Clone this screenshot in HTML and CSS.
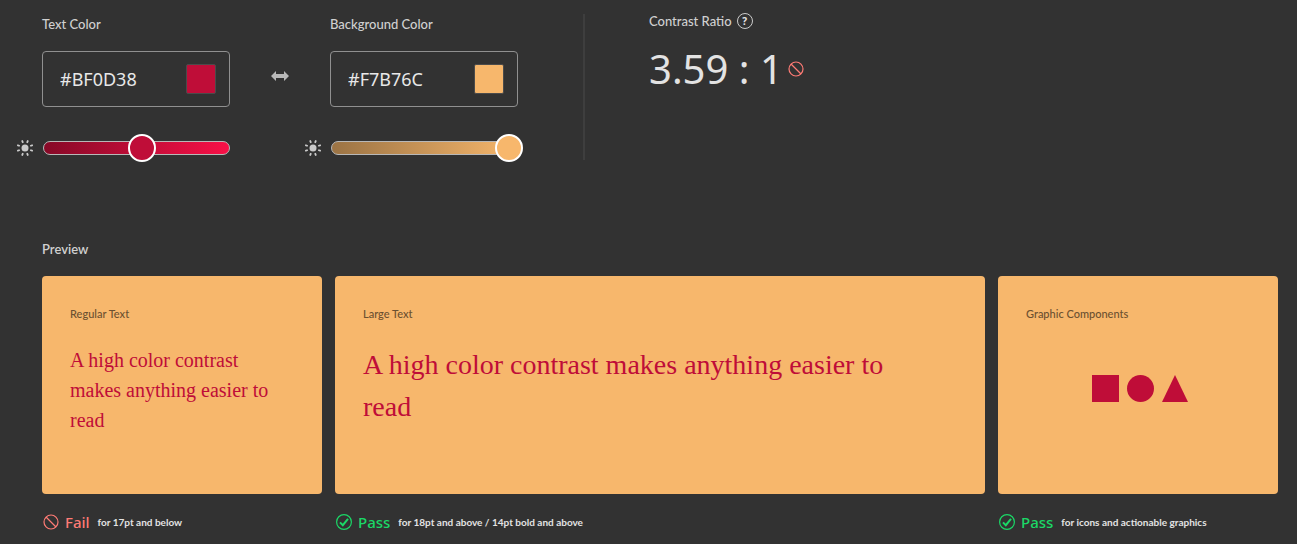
FILE: index.html
```html
<!DOCTYPE html>
<html lang="en">
<head>
<meta charset="utf-8">
<title>Contrast Checker</title>
<link rel="stylesheet" href="styles.css">
</head>
<body>
<main class="page">
  <section class="controls">
    <div class="field">
      <label class="label" for="text-hex">Text Color</label>
      <div class="hex-box">
        <input class="hex" id="text-hex" type="text" value="#BF0D38" spellcheck="false">
        <button class="swatch swatch-text" type="button" aria-label="Pick text color"></button>
      </div>
      <div class="slider-row">
        <svg class="sun" viewBox="0 0 16 16" aria-hidden="true"><circle cx="8" cy="8" r="3.5"/><path d="M5 .4l1 2.400M11 .4l-1 2.400M5 15.600l1-2.400M11 15.600l-1-2.400M.2 5l2.600 1M15.800 5l-2.600 1M.2 11l2.600-1M15.800 11l-2.600-1"/></svg>
        <div class="track track-text">
          <input class="range range-text" type="range" min="0" max="100" value="53" aria-label="Text color brightness">
        </div>
      </div>
    </div>
    <button class="swap" type="button" aria-label="Swap colors">
      <svg class="swap-icon" viewBox="0 0 18 10" aria-hidden="true"><path d="M0 5L5 0v3h8V0l5 5-5 5V7H5v3z"/></svg>
    </button>
    <div class="field">
      <label class="label" for="bg-hex">Background Color</label>
      <div class="hex-box">
        <input class="hex" id="bg-hex" type="text" value="#F7B76C" spellcheck="false">
        <button class="swatch swatch-bg" type="button" aria-label="Pick background color"></button>
      </div>
      <div class="slider-row">
        <svg class="sun" viewBox="0 0 16 16" aria-hidden="true"><circle cx="8" cy="8" r="3.5"/><path d="M5 .4l1 2.400M11 .4l-1 2.400M5 15.600l1-2.400M11 15.600l-1-2.400M.2 5l2.600 1M15.800 5l-2.600 1M.2 11l2.600-1M15.800 11l-2.600-1"/></svg>
        <div class="track track-bg">
          <input class="range range-bg" type="range" min="0" max="100" value="100" aria-label="Background color brightness">
        </div>
      </div>
    </div>
    <div class="ratio">
      <div class="ratio-head">
        <h2 class="label">Contrast Ratio</h2>
        <button class="help" type="button" aria-label="Help">?</button>
      </div>
      <div class="ratio-value">
        <span>3.59 : 1</span>
        <svg class="icon fail" viewBox="0 0 16 16" aria-hidden="true"><circle cx="8" cy="8" r="7"/><path d="M3 3l10 10"/></svg>
      </div>
    </div>
  </section>

  <section class="preview">
    <h2 class="label preview-label">Preview</h2>
    <div class="cards">
      <article>
        <div class="card">
          <h3 class="card-title">Regular Text</h3>
          <p class="sample">A high color contrast makes anything easier to read</p>
        </div>
        <div class="verdict">
          <svg class="icon fail" viewBox="0 0 16 16" aria-hidden="true"><circle cx="8" cy="8" r="7"/><path d="M3 3l10 10"/></svg>
          <strong class="result fail">Fail</strong>
          <span class="note">for 17pt and below</span>
        </div>
      </article>
      <article>
        <div class="card">
          <h3 class="card-title">Large Text</h3>
          <p class="sample sample-large">A high color contrast makes anything easier to read</p>
        </div>
        <div class="verdict">
          <svg class="icon pass" viewBox="0 0 16 16" aria-hidden="true"><circle cx="8" cy="8" r="7.4"/><path class="tick" d="M4 8.4l2.8 2.8L12 4.8"/></svg>
          <strong class="result pass">Pass</strong>
          <span class="note">for 18pt and above / 14pt bold and above</span>
        </div>
      </article>
      <article>
        <div class="card">
          <h3 class="card-title">Graphic Components</h3>
          <svg class="shapes" viewBox="-4 0 100 27" role="img" aria-label="Square, circle and triangle"><path d="M0 0h27v27H0z"/><circle cx="48.5" cy="13.5" r="13.5"/><path d="M83 0l13 27H70z"/></svg>
        </div>
        <div class="verdict">
          <svg class="icon pass" viewBox="0 0 16 16" aria-hidden="true"><circle cx="8" cy="8" r="7.4"/><path class="tick" d="M4 8.4l2.8 2.8L12 4.8"/></svg>
          <strong class="result pass">Pass</strong>
          <span class="note">for icons and actionable graphics</span>
        </div>
      </article>
    </div>
  </section>
</main>
</body>
</html>
```

FILE: styles.css
```css
:root {
  --text-color: #bf0d38;
  --bg-color: #f7b76c;
}

* {
  box-sizing: border-box;
}

body {
  margin: 0;
  background: #323232;
  color: #e3e3e3;
  font-family: Lato, "Noto Sans", sans-serif;
}

h2, h3, p {
  margin: 0;
}

button {
  padding: 0;
  cursor: pointer;
}

.page {
  padding: 14px 19px 0 42px;
}

.controls {
  display: flex;
}

.field {
  width: 188px;
}

.label {
  display: block;
  font-size: 13px;
  font-weight: 500;
  line-height: 20px;
  color: #d0d0d0;
}

.preview-label {
  font-weight: 600;
}

.hex-box {
  display: flex;
  align-items: center;
  justify-content: space-between;
  height: 56px;
  margin-top: 17px;
  padding: 0 13px 0 17px;
  border: 1px solid #909090;
  border-radius: 4px;
}

.hex {
  width: 110px;
  padding: 0;
  border: 0;
  outline: 0;
  background: none;
  color: #e8e8e8;
  font-family: "Noto Sans", sans-serif;
  font-size: 18px;
}

.swatch {
  width: 30px;
  height: 30px;
  border: 1px solid #4b4b4b;
  border-radius: 2px;
}

.swatch-text {
  background: var(--text-color);
}

.swatch-bg {
  background: var(--bg-color);
}

.slider-row {
  display: flex;
  align-items: center;
  gap: 10px;
  height: 24px;
  margin: 29px 0 0 -25px;
}

.sun {
  flex: none;
  width: 16px;
  height: 16px;
  fill: #cbcbcb;
  stroke: #cbcbcb;
  stroke-width: 1.8;
}

.sun circle {
  stroke: none;
}

.track {
  display: flex;
  flex: 1;
  align-items: center;
  height: 14px;
  border: 1px solid #b8b8b8;
  border-radius: 7px;
}

.track-text {
  background: linear-gradient(90deg, #860927, #f91047);
}

.track-bg {
  background: linear-gradient(90deg, #9b7344, #f7b76c);
}

.range {
  flex: 1;
  min-width: 0;
  height: 28px;
  margin: 0 -6px;
  appearance: none;
  background: none;
}

.range::-webkit-slider-thumb {
  width: 28px;
  height: 28px;
  appearance: none;
  border: 2px solid #fff;
  border-radius: 50%;
}

.range-text::-webkit-slider-thumb {
  background: var(--text-color);
}

.range-bg::-webkit-slider-thumb {
  background: var(--bg-color);
}

.swap {
  display: flex;
  align-items: center;
  justify-content: center;
  align-self: flex-start;
  width: 100px;
  height: 24px;
  margin-top: 50px;
  border: 0;
  background: none;
}

.swap-icon {
  width: 18px;
  height: 10px;
  fill: #b9b9b9;
}

.ratio {
  margin-left: 65px;
  padding-left: 64px;
  border-left: 2px solid #3e3e3e;
}

.ratio-head {
  display: flex;
  align-items: center;
  gap: 5px;
  height: 14px;
}

.help {
  width: 16px;
  height: 16px;
  border: 1px solid #cbcbcb;
  border-radius: 50%;
  background: none;
  color: #e3e3e3;
  font: 700 10px/14px "Noto Sans", sans-serif;
}

.ratio-value {
  display: flex;
  align-items: center;
  gap: 5px;
  margin-top: 11px;
  font-family: "Noto Sans", sans-serif;
  font-size: 40px;
  line-height: 60px;
}

.icon {
  flex: none;
  width: 16px;
  height: 16px;
  fill: none;
  stroke: currentColor;
  stroke-width: 1.2;
}

.tick {
  stroke-width: 2;
}

.fail {
  color: #ff7b75;
}

.pass {
  color: #1bd867;
}

.preview {
  margin-top: 79px;
}

.cards {
  display: grid;
  grid-template-columns: 280fr 650fr 280fr;
  gap: 13px;
  margin-top: 17px;
}

.card {
  min-height: 218px;
  padding: 30px 28px;
  border-radius: 4px;
  background: var(--bg-color);
}

.card-title {
  font-size: 11px;
  font-weight: 500;
  line-height: 16px;
  color: #6b5030;
}

.sample {
  margin-top: 23px;
  color: var(--text-color);
  font-family: "Liberation Serif", serif;
  font-size: 20px;
  line-height: 30px;
}

.sample-large {
  max-width: 540px;
  margin-top: 22px;
  font-size: 28px;
  line-height: 42px;
}

.shapes {
  display: block;
  width: 100px;
  height: 27px;
  margin: 53px auto 0;
  fill: var(--text-color);
}

.verdict {
  display: flex;
  align-items: center;
  margin-top: 17px;
  padding-left: 1px;
}

.result {
  margin: 0 8px 0 6px;
  font-family: "Noto Sans", sans-serif;
  font-size: 15px;
  font-weight: 500;
  line-height: 22px;
}

.note {
  font-size: 10px;
  font-weight: 700;
}
```
